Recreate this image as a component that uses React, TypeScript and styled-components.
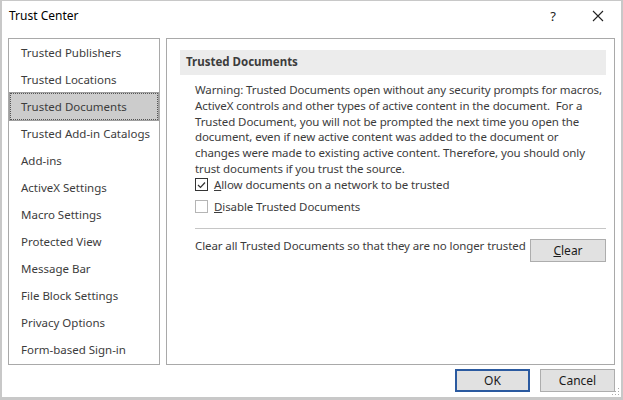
import React from "react";
import styled, { createGlobalStyle } from "styled-components";

const GlobalStyle = createGlobalStyle`
    html, body {
        margin: 0;
        padding: 0;
        background: #ffffff;
    }
    * {
        box-sizing: border-box;
    }
`;

const navItems = [
    "Trusted Publishers",
    "Trusted Locations",
    "Trusted Documents",
    "Trusted Add-in Catalogs",
    "Add-ins",
    "ActiveX Settings",
    "Macro Settings",
    "Protected View",
    "Message Bar",
    "File Block Settings",
    "Privacy Options",
    "Form-based Sign-in",
];

const warningLines = [
    "Warning: Trusted Documents open without any security prompts for macros,",
    "ActiveX controls and other types of active content in the document.\u00a0 For a",
    "Trusted Document, you will not be prompted the next time you open the",
    "document, even if new active content was added to the document or",
    "changes were made to existing active content. Therefore, you should only",
    "trust documents if you trust the source.",
];

export default function App() {
    return (
        <>
            <GlobalStyle />
            <Window>
                <TitleBar>
                    <Title>Trust Center</Title>
                    <TitleButtons>
                        <HelpGlyph>?</HelpGlyph>
                        <CloseIcon viewBox="0 0 12 12">
                            <path d="M1 1 L11 11 M11 1 L1 11" stroke="#222" strokeWidth="1.1" fill="none" />
                        </CloseIcon>
                    </TitleButtons>
                </TitleBar>
                <Body>
                    <NavPanel>
                        {navItems.map((item) => (
                            <NavItem key={item} $selected={item === "Trusted Documents"}>
                                {item}
                            </NavItem>
                        ))}
                    </NavPanel>
                    <ContentPanel>
                        <SectionHeader>Trusted Documents</SectionHeader>
                        <SectionBody>
                            <Warning>
                                {warningLines.map((line) => (
                                    <WarningLine key={line}>{line}</WarningLine>
                                ))}
                            </Warning>
                            <CheckRow>
                                <CheckBox $checked>
                                    <svg width="9" height="8" viewBox="0 0 9 8">
                                        <path d="M1 4 L3.5 6.5 L8 1.5" stroke="#333" strokeWidth="1.2" fill="none" />
                                    </svg>
                                </CheckBox>
                                <CheckLabel>
                                    <u>A</u>llow documents on a network to be trusted
                                </CheckLabel>
                            </CheckRow>
                            <CheckRow>
                                <CheckBox />
                                <CheckLabel>
                                    <u>D</u>isable Trusted Documents
                                </CheckLabel>
                            </CheckRow>
                            <Separator />
                            <ClearRow>
                                <ClearText>Clear all Trusted Documents so that they are no longer trusted</ClearText>
                                <DialogButton $width={76}>
                                    <u>C</u>lear
                                </DialogButton>
                            </ClearRow>
                        </SectionBody>
                    </ContentPanel>
                </Body>
                <Footer>
                    <DialogButton $width={75} $default>
                        OK
                    </DialogButton>
                    <DialogButton $width={75}>Cancel</DialogButton>
                    <Grip viewBox="0 0 8 8">
                        <rect x="6" y="0" width="1" height="1" fill="#aaa" />
                        <rect x="3" y="3" width="1" height="1" fill="#aaa" />
                        <rect x="6" y="3" width="1" height="1" fill="#aaa" />
                        <rect x="0" y="6" width="1" height="1" fill="#aaa" />
                        <rect x="3" y="6" width="1" height="1" fill="#aaa" />
                        <rect x="6" y="6" width="1" height="1" fill="#aaa" />
                    </Grip>
                </Footer>
            </Window>
        </>
    );
}

const Window = styled.div`
    position: relative;
    width: 623px;
    height: 400px;
    display: flex;
    flex-direction: column;
    border: 2px solid #c8c8c8;
    border-top-width: 1px;
    border-bottom-width: 3px;
    background: #ffffff;
    font-family: "Noto Sans", "Open Sans", sans-serif;
    font-size: 11.5px;
    color: #333333;
`;

const TitleBar = styled.div`
    height: 29px;
    display: flex;
    align-items: center;
    justify-content: space-between;
    padding-left: 7px;
    padding-right: 17px;
`;

const Title = styled.span`
    font-size: 12px;
    color: #000000;
`;

const TitleButtons = styled.div`
    display: flex;
    align-items: center;
    gap: 36px;
`;

const HelpGlyph = styled.span`
    font-size: 13px;
    color: #222222;
`;

const CloseIcon = styled.svg`
    width: 12px;
    height: 12px;
`;

const Body = styled.div`
    display: flex;
    gap: 6px;
    padding: 8px 0 0 6px;
    height: 335px;
`;

const NavPanel = styled.div`
    width: 152px;
    height: 327px;
    border: 1px solid #a9a9a9;
    display: flex;
    flex-direction: column;
    padding: 0 1px;
`;

const NavItem = styled.div<{ $selected?: boolean }>`
    height: 27px;
    line-height: 25px;
    padding-left: 10px;
    color: #3c3c3c;
    white-space: nowrap;
    background: ${(p) => (p.$selected ? "#cccccc" : "transparent")};
    border: 1px ${(p) => (p.$selected ? "dotted #555555" : "solid transparent")};
    box-shadow: ${(p) => (p.$selected ? "0 0 0 1px #9e9e9e" : "none")};
`;

const ContentPanel = styled.div`
    width: 449px;
    height: 327px;
    border: 1px solid #a9a9a9;
    padding: 11px 8px 0 13px;
`;

const SectionHeader = styled.div`
    height: 25px;
    background: #ececec;
    padding-left: 6px;
    line-height: 24px;
    font-weight: bold;
    color: #3c3c3c;
`;

const SectionBody = styled.div`
    padding: 7px 0 0 15px;
    display: flex;
    flex-direction: column;
    letter-spacing: -0.1px;
`;

const Warning = styled.div`
    display: flex;
    flex-direction: column;
    margin-bottom: -3px;
`;

const WarningLine = styled.div`
    height: 15.8px;
    line-height: 16px;
    white-space: nowrap;
    color: #3c3c3c;
`;

const CheckRow = styled.div`
    display: flex;
    align-items: center;
    gap: 6px;
    height: 22px;
`;

const CheckBox = styled.div<{ $checked?: boolean }>`
    width: 13px;
    height: 13px;
    border: 1px solid ${(p) => (p.$checked ? "#333333" : "#b5b5b5")};
    background: #ffffff;
    display: flex;
    align-items: center;
    justify-content: center;
`;

const CheckLabel = styled.span`
    color: #3c3c3c;
    white-space: nowrap;
`;

const Separator = styled.div`
    height: 1px;
    background: #c6c6c6;
    margin-top: 10px;
`;

const ClearRow = styled.div`
    display: flex;
    justify-content: space-between;
    align-items: flex-start;
    padding-top: 10px;
`;

const ClearText = styled.span`
    color: #3c3c3c;
    white-space: nowrap;
    line-height: 14px;
`;

const DialogButton = styled.div<{ $width: number; $default?: boolean }>`
    width: ${(p) => p.$width}px;
    flex-shrink: 0;
    height: 23px;
    display: flex;
    align-items: center;
    justify-content: center;
    background: #e1e1e1;
    border: ${(p) => (p.$default ? "2px solid #2b5aa0" : "1px solid #adadad")};
    color: #1a1a1a;
    font-size: 12px;
    letter-spacing: 0;
`;

const Footer = styled.div`
    display: flex;
    justify-content: flex-end;
    gap: 10px;
    padding: 4px 6px 0 0;
`;

const Grip = styled.svg`
    position: absolute;
    right: 1px;
    bottom: 1px;
    width: 8px;
    height: 8px;
`;
